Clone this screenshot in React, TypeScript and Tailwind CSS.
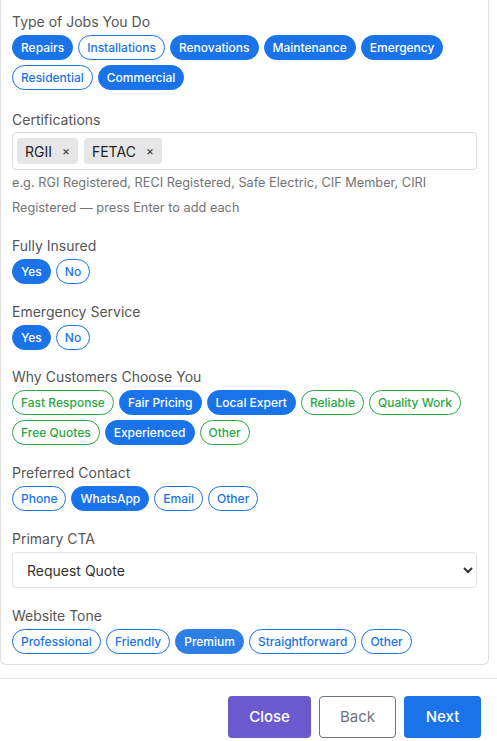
import React from "react";

type Opt = { label: string; on?: boolean; soft?: boolean };

const JOBS: Opt[] = [
  { label: "Repairs", on: true },
  { label: "Installations" },
  { label: "Renovations", on: true },
  { label: "Maintenance", on: true },
  { label: "Emergency", on: true },
  { label: "Residential" },
  { label: "Commercial", on: true },
];

const WHY: Opt[] = [
  { label: "Fast Response" },
  { label: "Fair Pricing", on: true },
  { label: "Local Expert", on: true },
  { label: "Reliable" },
  { label: "Quality Work" },
  { label: "Free Quotes" },
  { label: "Experienced", on: true },
  { label: "Other" },
];

const CONTACT: Opt[] = [
  { label: "Phone" },
  { label: "WhatsApp", on: true },
  { label: "Email" },
  { label: "Other" },
];

const TONE: Opt[] = [
  { label: "Professional" },
  { label: "Friendly" },
  { label: "Premium", on: true, soft: true },
  { label: "Straightforward" },
  { label: "Other" },
];

const YESNO: Opt[] = [{ label: "Yes", on: true }, { label: "No" }];

function Pill({ opt, green }: { opt: Opt; green?: boolean }) {
  let cls = "border-[#1a73e8] bg-white text-[#1a73e8]";
  if (green && !opt.on) cls = "border-[#28a745] bg-white text-[#28a745]";
  if (opt.on) cls = "border-[#1a73e8] bg-[#1a73e8] text-white";
  if (opt.soft) cls = "border-[#2d7fe6] bg-[#2d7fe6] text-white";
  return (
    <span className={["flex h-[25px] items-center rounded-full border px-2 text-[12px] font-medium leading-none", cls].join(" ")}>
      {opt.label}
    </span>
  );
}

function Pills({ items, green }: { items: Opt[]; green?: boolean }) {
  return (
    <div className="flex flex-wrap gap-x-[5px] gap-y-[5px]">
      {items.map((o) => (
        <Pill key={o.label} opt={o} green={green} />
      ))}
    </div>
  );
}

function Field({ label, children, gap = "mb-[18px]" }: { label: string; children: React.ReactNode; gap?: string }) {
  return (
    <div className={gap}>
      <p className="mb-[3px] text-[14px] leading-5 text-[#555]">{label}</p>
      {children}
    </div>
  );
}

export default function App() {
  return (
    <div className="min-h-[741px] w-[497px] bg-white font-['Inter','Noto_Sans',sans-serif]">
      <div className="w-[489px] rounded-b-md border-x border-b border-[#dedede] px-[11px] pb-[10px] pt-3">
        <Field label="Type of Jobs You Do" gap="mb-5">
          <Pills items={JOBS} />
        </Field>

        <div className="mb-4">
          <p className="mb-[2px] text-[14px] leading-5 text-[#555]">Certifications</p>
          <div className="flex h-[38px] items-center gap-1.5 rounded border border-[#dcdcdc] px-1">
            {["RGII", "FETAC"].map((c) => (
              <span key={c} className="flex h-[26px] items-center gap-2.5 rounded-sm bg-[#e6e6e6] pl-2 pr-2 text-[14px] text-[#1f1f1f]">
                {c}
                <span className="text-[12px] text-[#333]">×</span>
              </span>
            ))}
          </div>
          <p className="text-[12.75px] leading-[25px] text-[#737373]">
            e.g. RGI Registered, RECI Registered, Safe Electric, CIF Member, CIRI Registered — press Enter to add each
          </p>
        </div>

        <Field label="Fully Insured">
          <Pills items={YESNO} />
        </Field>

        <Field label="Emergency Service" gap="mb-[17px]">
          <Pills items={YESNO} />
        </Field>

        <Field label="Why Customers Choose You">
          <Pills items={WHY} green />
        </Field>

        <Field label="Preferred Contact">
          <Pills items={CONTACT} />
        </Field>

        <Field label="Primary CTA">
          <select
            defaultValue="Request Quote"
            className="h-[36px] w-full rounded border border-[#e2e2e2] bg-white pl-[10px] pr-2 text-[14px] text-[#333]"
          >
            <option>Request Quote</option>
            <option>Call Now</option>
            <option>Book Online</option>
          </select>
        </Field>

        <Field label="Website Tone" gap="">
          <Pills items={TONE} />
        </Field>
      </div>

      <div className="mt-[13px] flex justify-end gap-2 border-t border-[#e5e5e5] pr-4 pt-[17px]">
        <button className="h-[42px] w-[83px] rounded bg-[#6a5acd] text-[15px] font-medium text-white">Close</button>
        <button className="h-[42px] w-[77px] rounded border border-[#6c757d] bg-white text-[15px] text-[#6c757d]">Back</button>
        <button className="h-[42px] w-[77px] rounded bg-[#1a73e8] text-[15px] font-medium text-white">Next</button>
      </div>
    </div>
  );
}
